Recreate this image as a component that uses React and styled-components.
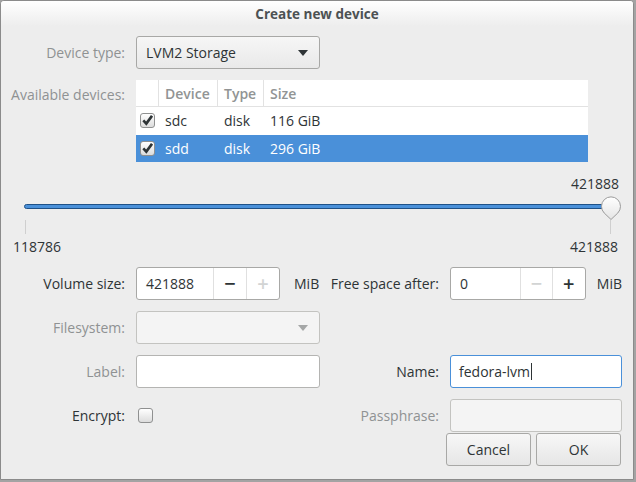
import React from "react";
import styled, { createGlobalStyle } from "styled-components";

const Global = createGlobalStyle`
  html, body { margin: 0; padding: 0; }
  body {
    background: #a3a3a3;
    font-family: "Open Sans", "Noto Sans", sans-serif;
    font-size: 14px;
    color: #2e3436;
    width: 636px;
    height: 482px;
    overflow: hidden;
  }
  * { box-sizing: border-box; }
`;

const Dialog = styled.div`
  width: 634px;
  height: 480px;
  background: #ededed;
  border: 1px solid #8b8b8b;
  border-radius: 4px 4px 0 0;
  display: flex;
  flex-direction: column;
  overflow: hidden;
`;

const TitleBar = styled.div`
  height: 25px;
  flex: none;
  display: flex;
  align-items: center;
  justify-content: center;
  background: linear-gradient(#ffffff, #ededed);
  font-weight: 700;
  font-size: 13.5px;
  color: #4c5153;
`;

const Body = styled.div`
  flex: 1;
  display: flex;
  flex-direction: column;
  padding: 10px 11px 0 10px;
`;

const TopGrid = styled.div`
  display: grid;
  grid-template-columns: 115px 452px;
  column-gap: 10px;
  row-gap: 11px;
`;

const Label = styled.div`
  text-align: right;
  padding-right: 1px;
  white-space: nowrap;
  color: ${(p) => (p.$dim ? "#8f9293" : "#2e3436")};
  display: flex;
  align-items: ${(p) => (p.$top ? "flex-start" : "center")};
  justify-content: flex-end;
  padding-top: ${(p) => (p.$top ? "5px" : "0")};
  height: ${(p) => (p.$top ? "auto" : "33px")};
`;

const Combo = styled.div`
  width: 184px;
  height: 33px;
  border: 1px solid ${(p) => (p.$disabled ? "#c3c3c0" : "#a8a8a6")};
  border-radius: 3px;
  background: ${(p) =>
    p.$disabled ? "#f4f4f4" : "linear-gradient(#f6f6f6, #e9e9e9)"};
  display: flex;
  align-items: center;
  justify-content: space-between;
  padding: 0 11px 0 9px;
  color: #2e3436;
`;

const Arrow = styled.span`
  width: 0;
  height: 0;
  border-left: 5px solid transparent;
  border-right: 5px solid transparent;
  border-top: 6px solid ${(p) => (p.$disabled ? "#a5a7a7" : "#2e3436")};
`;

const Table = styled.div`
  background: #fff;
  width: 452px;
  display: flex;
  flex-direction: column;
`;

const TRow = styled.div`
  display: grid;
  grid-template-columns: 23px 59px 46px 1fr;
  height: ${(p) => (p.$head ? "27px" : "27.5px")};
  align-items: stretch;
  background: ${(p) => (p.$selected ? "#4a90d9" : "#fff")};
  color: ${(p) => (p.$selected ? "#fff" : p.$head ? "#919494" : "#2e3436")};
  font-weight: ${(p) => (p.$head ? 600 : 400)};
  border-bottom: ${(p) => (p.$head ? "1px solid #e2e2e2" : "none")};
`;

const Cell = styled.div`
  display: flex;
  align-items: center;
  padding-left: ${(p) => (p.$check ? "4px" : "6px")};
  border-right: ${(p) => (p.$sep ? "1px solid #e2e2e2" : "none")};
  white-space: nowrap;
`;

const CheckBox = styled.span`
  width: 15px;
  height: 15px;
  border: 1px solid #8f9090;
  border-radius: 3px;
  background: linear-gradient(#ffffff, #dcdcdc);
  display: inline-flex;
  align-items: center;
  justify-content: center;
  flex: none;
`;

const SliderBox = styled.div`
  display: flex;
  flex-direction: column;
  padding: 0 3px 0 2px;
`;

const SliderTop = styled.div`
  margin-top: 13px;
  height: 17px;
  line-height: 17px;
  text-align: right;
  padding-right: 0;
`;

const TrackArea = styled.div`
  position: relative;
  height: 25px;
  margin-top: 3px;
`;

const Track = styled.div`
  position: absolute;
  left: 11px;
  right: 12px;
  top: 9px;
  height: 5px;
  border: 1px solid #1f5187;
  border-radius: 3px;
  background: #4a90d9;
`;

const Handle = styled.svg`
  position: absolute;
  right: -3px;
  top: 1px;
`;

const Ticks = styled.div`
  display: flex;
  justify-content: space-between;
  padding: 0 8px 0 12px;
  height: 14px;
`;

const Tick = styled.span`
  width: 1px;
  height: 14px;
  background: #cfcfcf;
`;

const SliderLabels = styled.div`
  display: flex;
  justify-content: space-between;
  height: 17px;
  line-height: 17px;
  margin-top: 4px;
  padding-right: 1px;
`;

const FormGrid = styled.div`
  display: grid;
  grid-template-columns: 115px 184px 110px 172px;
  grid-auto-rows: 33px;
  column-gap: 10px;
  row-gap: 11px;
  margin-top: 12px;
`;

const Inline = styled.div`
  display: flex;
  align-items: center;
  gap: ${(p) => p.$gap || 14}px;
`;

const Spin = styled.div`
  display: flex;
  height: 33px;
  border: 1px solid #a8a8a6;
  border-radius: 3px;
  background: #fff;
  overflow: hidden;
`;

const SpinEntry = styled.div`
  width: ${(p) => p.$w}px;
  display: flex;
  align-items: center;
  padding-left: 9px;
  border-right: 1px solid #e0e0e0;
`;

const SpinButton = styled.div`
  width: ${(p) => p.$w}px;
  display: flex;
  align-items: center;
  justify-content: center;
  font-size: 20px;
  font-weight: 600;
  color: ${(p) => (p.$disabled ? "#d2d4d4" : "#2e3436")};
  border-right: ${(p) => (p.$last ? "none" : "1px solid #e0e0e0")};
  line-height: 1;
`;

const Entry = styled.div`
  height: 33px;
  border: 1px solid
    ${(p) => (p.$focus ? "#4a90d9" : p.$disabled ? "#c3c3c0" : "#b4b4b2")};
  border-radius: 3px;
  background: ${(p) => (p.$disabled ? "#f4f4f4" : "#fff")};
  display: flex;
  align-items: center;
  padding-left: 8px;
`;

const Caret = styled.span`
  display: inline-block;
  width: 1px;
  height: 17px;
  background: #2e3436;
  margin-left: 1px;
`;

const CheckCell = styled.div`
  display: flex;
  align-items: center;
  padding-left: 2px;
`;

const ButtonRow = styled.div`
  display: flex;
  justify-content: flex-end;
  gap: 5px;
  margin-top: 1px;
  padding-right: 1px;
`;

const Button = styled.div`
  width: 85px;
  height: 33px;
  border: 1px solid #a8a8a6;
  border-radius: 3px;
  background: linear-gradient(#f7f7f7, #e6e6e6);
  display: flex;
  align-items: center;
  justify-content: center;
  color: #2e3436;
`;

const Check = () => (
  <svg width="11" height="11" viewBox="0 0 11 11">
    <path d="M1.3 5.3 L4.3 8.6 L10 0.8" fill="none" stroke="#2e3436" strokeWidth="2.6" strokeLinejoin="miter" />
  </svg>
);

const rows = [
  { dev: "sdc", type: "disk", size: "116 GiB" },
  { dev: "sdd", type: "disk", size: "296 GiB", selected: true },
];

export default function App() {
  return (
    <>
      <Global />
      <Dialog>
        <TitleBar>Create new device</TitleBar>
        <Body>
          <TopGrid>
            <Label $dim>Device type:</Label>
            <Combo>
              <span>LVM2 Storage</span>
              <Arrow />
            </Combo>
            <Label $dim $top>Available devices:</Label>
            <Table>
              <TRow $head>
                <Cell $sep />
                <Cell $sep>Device</Cell>
                <Cell $sep>Type</Cell>
                <Cell>Size</Cell>
              </TRow>
              {rows.map((r) => (
                <TRow key={r.dev} $selected={r.selected}>
                  <Cell $check>
                    <CheckBox>
                      <Check />
                    </CheckBox>
                  </Cell>
                  <Cell>{r.dev}</Cell>
                  <Cell>{r.type}</Cell>
                  <Cell>{r.size}</Cell>
                </TRow>
              ))}
            </Table>
          </TopGrid>

          <SliderBox>
            <SliderTop>421888</SliderTop>
            <TrackArea>
              <Track />
              <Handle width="22" height="25" viewBox="0 0 22 25">
                <defs>
                  <linearGradient id="hg" x1="0" y1="0" x2="0" y2="1">
                    <stop offset="0" stopColor="#ffffff" />
                    <stop offset="1" stopColor="#e4e4e4" />
                  </linearGradient>
                </defs>
                <path
                  d="M11 23.5 L4.2 17 A9.5 9.5 0 1 1 17.8 17 Z"
                  fill="url(#hg)"
                  stroke="#9b9b9b"
                  strokeWidth="1"
                />
              </Handle>
            </TrackArea>
            <Ticks>
              <Tick />
              <Tick />
            </Ticks>
            <SliderLabels>
              <span>118786</span>
              <span>421888</span>
            </SliderLabels>
          </SliderBox>

          <FormGrid>
            <Label>Volume size:</Label>
            <Inline $gap={14}>
              <Spin>
                <SpinEntry $w={77}>421888</SpinEntry>
                <SpinButton $w={33}>−</SpinButton>
                <SpinButton $w={32} $last $disabled>+</SpinButton>
              </Spin>
              <span>MiB</span>
            </Inline>
            <Label>Free space after:</Label>
            <Inline $gap={11}>
              <Spin>
                <SpinEntry $w={72}>0</SpinEntry>
                <SpinButton $w={32} $disabled>−</SpinButton>
                <SpinButton $w={33} $last>+</SpinButton>
              </Spin>
              <span>MiB</span>
            </Inline>

            <Label $dim>Filesystem:</Label>
            <Combo $disabled>
              <span />
              <Arrow $disabled />
            </Combo>
            <div />
            <div />

            <Label $dim>Label:</Label>
            <Entry />
            <Label>Name:</Label>
            <Entry $focus>
              fedora-lvm
              <Caret />
            </Entry>

            <Label>Encrypt:</Label>
            <CheckCell>
              <CheckBox />
            </CheckCell>
            <Label $dim>Passphrase:</Label>
            <Entry $disabled />
          </FormGrid>

          <ButtonRow>
            <Button>Cancel</Button>
            <Button>OK</Button>
          </ButtonRow>
        </Body>
      </Dialog>
    </>
  );
}
